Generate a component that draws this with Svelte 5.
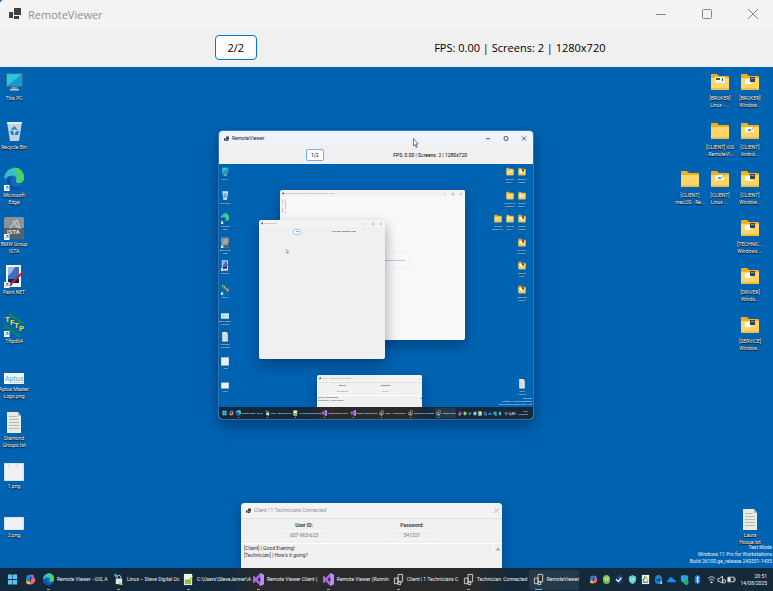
<script>
  const shortcuts = [
    { icon: 'pc', label: 'This PC' },
    { icon: 'bin', label: 'Recycle Bin' },
    { icon: 'edge', label: 'Microsoft\nEdge', link: true },
    { icon: 'ista', label: 'BMW Group\nISTA', link: true },
    { icon: 'paint', label: 'Paint.NET', link: true },
    { icon: 'tftp', label: 'Tftpd64', link: true },
    { icon: 'aptus', label: 'Aptus Master\nLogo.png' },
    { icon: 'text', label: 'Diamond\nGroups.txt' },
    { icon: 'image', label: '1.png' },
    { icon: 'imageWide', label: '2.png' },
  ];

  // null leaves the grid cell empty
  const folders = [
    null, { icon: 'folder', mark: 'key', label: '[BROKER]\nLinux - ...' }, { icon: 'folder', mark: 'dark', label: '[BROKER]\nWindow...' },
    null, { icon: 'folder', label: '[CLIENT] iOS\n- RemoteVi...' }, { icon: 'folder', mark: 'pen', label: '[CLIENT]\nAndroi...' },
    { icon: 'folder', label: '[CLIENT]\nmacOS - Re...' }, { icon: 'folder', mark: 'pen', label: '[CLIENT]\nLinux -...' }, { icon: 'folder', mark: 'dark', label: '[CLIENT]\nWindow...' },
    null, null, { icon: 'folder', mark: 'dark', label: '[TECHNIC...\nWindows ...' },
    null, null, { icon: 'folder', mark: 'dark', label: '[DRIVER]\nWindo...' },
    null, null, { icon: 'folder', mark: 'dark', label: '[SERVICE]\nWindow...' },
    null, null, null,
    null, null, null,
    null, null, null,
    null, null, { icon: 'text', label: 'Laura\nHosue.txt' },
  ];

  const tasks = [
    { icon: 'edge', label: 'Remote Viewer - iOS, A' },
    { icon: 'putty', label: 'Linux – Steve Digital Oc' },
    { icon: 'notepad', label: 'C:\\Users\\SteveJenner\\A' },
    { icon: 'vs', label: 'Remote Viewer Client (' },
    { icon: 'vs', label: 'Remote Viewer (Runnin' },
    { icon: 'app', label: 'Client | 1 Technicians C' },
    { icon: 'app', label: 'Technician: Connected' },
    { icon: 'app', label: 'RemoteViewer', active: true },
  ];

  const tray = ['copilot', 'torrent', 'steam', 'shield', 'drive', 'teams', 'cloud', 'defender', 'bluetooth'];
</script>

{#snippet logo()}
  <svg class="logo" viewBox="0 0 12 12" aria-hidden="true">
    <path d="M0 4h4v6H0zM5 0h7v7H5zM5 8h5v3H5z" fill="#404040" />
  </svg>
{/snippet}

{#snippet controls()}
  <div class="controls">
    <button aria-label="Minimize"><svg viewBox="0 0 10 10"><path d="M0 5.5h10" /></svg></button>
    <button aria-label="Maximize"><svg viewBox="0 0 10 10"><rect x=".5" y=".5" width="9" height="9" rx="1" /></svg></button>
    <button aria-label="Close"><svg viewBox="0 0 10 10"><path d="M0 0l10 10M10 0L0 10" /></svg></button>
  </div>
{/snippet}

{#snippet art(name, mark)}
  {#if name === 'pc'}
    <path d="M8 16h5l1 4H7z" fill="#7f93a0" />
    <path d="M6 19h9v1.500H6z" fill="#b9c5cc" />
    <rect x="2" y="3" width="17" height="14" rx="1" fill="#31708f" />
    <path d="M3 4h15v12H3z" fill="#2cc3dc" />
    <path d="M18 4v12H3z" fill="#159bd0" />
  {:else if name === 'bin'}
    <path d="M3 3h15l-3 19H6z" fill="#c3d3df" />
    <path d="M3 3h15l-.5 2h-14z" fill="#e6edf2" />
    <path d="M10.500 7l3 4h-2l-1-1.500-1.500 2-2-1zM6 12h3l1 4H7.500zM15 12l-1 4h-3v-2l2-2z" fill="#1480d6" />
  {:else if name === 'edge'}
    <ellipse cx="10" cy="12" rx="10" ry="11.500" fill="#1267b8" />
    <path d="M0 12C1-2 20-3 20 11c0 6-8 6-8 3 2-4-3-9-12-2z" fill="#35c1c9" />
    <path d="M9 .5c8 0 11 5 11 10.500 0 6-8 6-8 3C16 8 12 4 9 .5z" fill="#4bd35b" />
    <path d="M6 14c0 6 6 8 12 5-6 8-15 3-15-4 0-3 2-5 5-5-1 1-2 2-2 4z" fill="#0b4f9c" />
  {:else if name === 'ista'}
    <rect y="1" width="20" height="22" rx="2" fill="#8b9195" />
    <path d="M0 12h20v9l-2 2H2l-2-2z" fill="#596065" />
    <path d="M6 12L13 4l3 9M9 5l5 7" stroke="#b9bec1" stroke-width="1.500" fill="none" />
    <text x="3" y="18" font-size="6" font-weight="700" fill="#dce0e2">ISTA</text>
  {:else if name === 'paint'}
    <path d="M2 1h15v22H2z" fill="#f2f5f8" />
    <path d="M4 3h11v13H4z" fill="#416cc0" />
    <path d="M4 3h7l-3 5-4 4z" fill="#98b8ea" />
    <path d="M4 15h11v4H4z" fill="#17254e" />
    <path d="M19 8L8 19l-2 3" stroke="#b02832" stroke-width="2" fill="none" />
  {:else if name === 'tftp'}
    <path d="M5 1l15 10M0 12l16 12" stroke="#118c36" stroke-width="2" />
    <g font-size="8" font-weight="700" fill="#ffd21e">
      <text x="1" y="9">T</text>
      <text x="6" y="12">F</text>
      <text x="10" y="15">T</text>
      <text x="15" y="18">P</text>
    </g>
  {:else if name === 'aptus'}
    <path d="M0 12h20v11H0z" fill="#f3f8fb" />
    <text x="1" y="20" font-size="7" fill="#35afe0">Aptus</text>
    <path d="M8 21.500h11" stroke="#c8d4da" />
  {:else if name === 'text'}
    <path d="M3 2h11l3 4v17H3z" fill="#e9e9e6" />
    <path d="M14 2l3 4h-3z" fill="#adb2b5" />
    <path d="M5 6.500h8M5 9.500h10M5 12.500h10M5 15.500h10M5 18.500h10" stroke="#b7b9ba" />
  {:else if name === 'image'}
    <path d="M.5 5.500h19v17H.5z" fill="#f0f0f0" stroke="#d3e4f4" />
    <path d="M4 7.500h2M12 7.500h2" stroke="#ccc" />
  {:else if name === 'imageWide'}
    <path d="M.5 10.500h19v12H.5z" fill="#f0f0f0" stroke="#d3e4f4" />
  {:else if name === 'folder'}
    <path d="M1 5q0-1 1-1h5l2 2h9q1 0 1 1v5H1z" fill="#f3ae1e" />
    <path d="M1 8h18v11q0 1-1 1H2q-1 0-1-1z" fill="#ffd667" />
    <path d="M1 18h18v1q0 1-1 1H2q-1 0-1-1z" fill="#f5bd42" />
    {#if mark === 'dark'}
      <path d="M5 9h6v5H5z" fill="#fff" />
      <path d="M10 7h5v5h-5z" fill="#3d434a" />
      <path d="M11 8.500h3" stroke="#8f979e" />
    {:else if mark === 'key'}
      <path d="M5 7h10v6H5z" fill="#eef3ed" />
      <path d="M6 8h4v2H6zM12 8h1v3h-1z" fill="#345b45" />
    {:else if mark === 'pen'}
      <path d="M5 8h9v5H8l-3 2z" fill="#f5f8f5" />
      <path d="M15 6l-3 5" stroke="#dd9b32" />
      <path d="M8 10h3v2H8z" fill="#63a2ad" />
    {/if}
  {/if}
{/snippet}

{#snippet shortcut(item)}
  <a class="shortcut" href="#{item.icon}">
    <svg viewBox="0 0 20 24" preserveAspectRatio="none" aria-hidden="true">
      {@render art(item.icon, item.mark)}
      {#if item.link}
        <path d="M0 18h5.500v6H0z" fill="#fff" />
        <path d="M1.500 22.500l2.500-3M2 19.500h2v2.500" stroke="#1377cf" fill="none" stroke-width=".8" />
      {/if}
    </svg>
    <span>{item.label}</span>
  </a>
{/snippet}

{#snippet taskIcon(name)}
  <svg class="task-icon" viewBox="0 0 12 14" preserveAspectRatio="none" aria-hidden="true">
    {#if name === 'start'}
      <path d="M1 1.500h4.700v5H1zM6.300 1.500H11v5H6.300zM1 7.500h4.700v5H1zM6.300 7.500H11v5H6.300z" fill="#55c8f7" />
    {:else if name === 'copilot'}
      <path d="M3 2h4L5 9H1q0-5 2-7z" fill="#2587dc" />
      <path d="M6 2h3l2 5-3 1z" fill="#a95ae0" />
      <path d="M11 6q1 4-3 6H5l2-6z" fill="#ef6b68" />
      <path d="M1 9h4l1 3H3q-2 0-2-3z" fill="#f0c437" />
    {:else if name === 'edge'}
      <g transform="scale(.6 .58)">{@render art('edge')}</g>
    {:else if name === 'putty'}
      <path d="M1 1l4 1-2 3z" fill="#3ad2f0" />
      <path d="M3 6h7v6H3z" fill="#e4e6e7" />
      <path d="M4.500 6V3.500q2-2 4 0V6" stroke="#cdd1d3" fill="none" />
      <path d="M7 9l4 4H7z" fill="#9edb35" />
    {:else if name === 'notepad'}
      <path d="M1 1h9v12H1z" fill="#eef3df" />
      <path d="M2 7h7v5H2z" fill="#84c446" />
      <path d="M11 3L6 9" stroke="#c48c2b" />
    {:else if name === 'vs'}
      <path d="M8 0l4 2v10l-4 2-5-5-2 2-1-1V4l1-1 2 2z" fill="#a66be0" />
      <path d="M8 4v6L5 7z" fill="#29213d" />
      <path d="M8 0l4 2v10l-4 2z" fill="#d3a1ff" opacity=".6" />
    {:else if name === 'app'}
      <path d="M1.500 5.500h4v6h-4zM5.500 1.500h5v8h-5zM5.500 9.500h3v3h-3z" fill="#333" stroke="#d5d5d5" />
    {/if}
  </svg>
{/snippet}

{#snippet trayIcon(name)}
  <svg viewBox="0 0 10 12" preserveAspectRatio="none" aria-hidden="true">
    {#if name === 'copilot'}
      <path d="M2 2h4L4 7H1z" fill="#2587dc" />
      <path d="M6 2h2l1 5H6z" fill="#b465e0" />
      <path d="M9 6q0 4-3 4H3l3-4z" fill="#ec6c5f" />
      <path d="M1 7h3l1 3H3q-2 0-2-3z" fill="#f0c437" />
    {:else if name === 'torrent'}
      <ellipse cx="5" cy="6" rx="4" ry="5" fill="#77bd45" />
      <path d="M3.500 3v3q1.500 3 3 0V3" stroke="#fff" fill="none" />
    {:else if name === 'steam'}
      <ellipse cx="5" cy="6" rx="4" ry="5" fill="#193e70" />
      <path d="M1 6l3 2 3-4" stroke="#fff" stroke-width="1.500" fill="none" />
    {:else if name === 'shield'}
      <path d="M5 1l4 2v4q-1 3-4 4-3-1-4-4V3z" fill="#67d1ce" />
      <path d="M3.500 6l1 1 2-2.500" stroke="#f4fffc" fill="none" />
    {:else if name === 'drive'}
      <path d="M1 1h8v10H1z" fill="#fff" />
      <path d="M5 2L2 8" stroke="#24a35a" stroke-width="1.500" />
      <path d="M5 2l3 6" stroke="#f6bd2b" stroke-width="1.500" />
      <path d="M2 9h6" stroke="#397fea" stroke-width="1.500" />
    {:else if name === 'teams'}
      <ellipse cx="5" cy="6" rx="4" ry="5" fill="#2085cc" />
      <path d="M3 5h4v3H3z" fill="#104b7b" />
      <path d="M7 8h2v3H7z" fill="#9ed8f7" />
    {:else if name === 'cloud'}
      <path d="M0 8q0-2 2-2 1-4 4-2 1 1 1.500 2Q10 6 10 8.500L9 9H1z" fill="#168ee5" />
    {:else if name === 'defender'}
      <path d="M1 2l4-1 4 1v4q-1 3-4 4Q1 9 1 6z" fill="#28a5df" />
      <ellipse cx="7" cy="9" rx="2.500" ry="3" fill="#2eab55" />
    {:else if name === 'bluetooth'}
      <rect x="2" y="1" width="6" height="10" rx="3" fill="#0b78e5" />
      <path d="M3.500 4l3 4L5 9.500v-7L6.500 4l-3 4" stroke="#fff" stroke-width=".8" fill="none" />
    {:else if name === 'wifi'}
      <path d="M1 5q4-4 8 0M2.500 7q2.500-3 5 0" stroke="#ddd" fill="none" />
      <path d="M4 8h2v2H4z" fill="#ddd" />
    {:else if name === 'sound'}
      <path d="M1 5h2l3-3v8L3 8H1z" stroke="#ddd" fill="none" />
      <ellipse cx="8" cy="8" rx="1.500" ry="2" stroke="#ddd" fill="none" />
    {:else if name === 'battery'}
      <path d="M1 3.500h7v5H1z" stroke="#ddd" fill="none" />
      <path d="M1 4h3v4H1zM8.500 5h1v2h-1z" fill="#eee" />
    {/if}
  </svg>
{/snippet}

{#snippet toolbar(screen, status)}
  <div class="toolbar">
    <button class="screen">{screen}</button>
    <span>{status}</span>
  </div>
{/snippet}

{#snippet client()}
  <section class="window client">
    <header class="titlebar">
      {@render logo()}
      <span>Client | 1 Technicians Connected</span>
      <button class="close" aria-label="Close"><svg viewBox="0 0 10 10"><path d="M0 0l10 10M10 0L0 10" /></svg></button>
    </header>
    <div class="session">
      <label>User ID:<input value="607-965-623" readonly /></label>
      <label>Password:<input value="541321" readonly /></label>
    </div>
    <div class="chat">
      <ul>
        <li>[Client] | Good Evening!</li>
        <li>[Technician] | How's it going?</li>
      </ul>
      <button aria-label="Scroll up"><svg viewBox="0 0 6 6"><path d="M0 5l3-4 3 4z" /></svg></button>
    </div>
  </section>
{/snippet}

{#snippet desktop(content)}
  <div class="desktop">
    <nav class="grid left" aria-label="Shortcuts">
      {#each shortcuts as item}{@render shortcut(item)}{/each}
    </nav>
    <nav class="grid right" aria-label="Folders">
      {#each folders as item}
        {#if item}{@render shortcut(item)}{:else}<i></i>{/if}
      {/each}
    </nav>
    <p class="watermark">Test Mode<br />Windows 11 Pro for Workstations<br />Build 26100.ge_release.240331-1435</p>
    {@render client()}
    {@render content()}
  </div>
  <footer class="taskbar">
    <button class="pin" aria-label="Start">{@render taskIcon('start')}</button>
    <button class="pin" aria-label="Copilot">{@render taskIcon('copilot')}</button>
    <div class="tasks">
      {#each tasks as task}
        <button class="task" class:active={task.active}>
          {@render taskIcon(task.icon)}
          <span>{task.label}</span>
        </button>
      {/each}
    </div>
    <div class="tray">
      {#each tray as name}{@render trayIcon(name)}{/each}
    </div>
    <div class="tray status">
      {@render trayIcon('wifi')}
      {@render trayIcon('sound')}
      {@render trayIcon('battery')}
    </div>
    <time>20:51<br />14/08/2025</time>
  </footer>
{/snippet}

{#snippet pointer()}
  <svg class="pointer" viewBox="0 0 6 10" aria-hidden="true">
    <path d="M.5.5v7.500l1.500-1.500L3.200 9.500l1-.5L3.200 6h2z" fill="#fff" stroke="#222" stroke-width=".6" />
  </svg>
{/snippet}

{#snippet innerContent()}
  <section class="window sharing">
    <header class="titlebar">
      {@render logo()}
      <span>Technician: Connected To Windows Device (RTB1-UB10)</span>
      {@render controls()}
    </header>
    <p class="side">[Registry] Viewer<br />OS | Connection</p>
    <button class="start">Start Streaming Screen</button>
  </section>
  <section class="window blank">
    <header class="titlebar">
      {@render logo()}
      <span>RemoteViewer</span>
      {@render controls()}
    </header>
    {@render toolbar('0/0', 'FPS: 0.00 | Screens: 0 | 0x0')}
    {@render pointer()}
  </section>
{/snippet}

{#snippet outerContent()}
  <section class="window viewer small">
    <header class="titlebar">
      {@render logo()}
      <span>RemoteViewer</span>
      {@render controls()}
    </header>
    {@render toolbar('1/2', 'FPS: 0.00 | Screens: 2 | 1280x720')}
    {@render desktop(innerContent)}
    {@render pointer()}
  </section>
{/snippet}

<main class="app">
  <header class="titlebar">
    {@render logo()}
    <span>RemoteViewer</span>
    {@render controls()}
  </header>
  {@render toolbar('2/2', 'FPS: 0.00 | Screens: 2 | 1280x720')}
  {@render desktop(outerContent)}
</main>

<style>
  :global(body) {
    margin: 0;
    background: #0063b1;
  }

  .app {
    --text: 5px;
    --line: 7px;
    --cell: 30px;
    --icon-w: 20px;
    --icon-h: 24px;
    --bar: 23px;
    min-height: 100vh;
    display: flex;
    flex-direction: column;
    font: 11px "Open Sans", "Noto Sans", sans-serif;
    color: #1a1a1a;
  }

  .app * {
    box-sizing: border-box;
  }

  button {
    padding: 0;
    border: 0;
    background: none;
    color: inherit;
    font: inherit;
  }

  svg {
    display: block;
    flex: none;
  }

  .titlebar {
    height: 28px;
    padding-left: 9px;
    display: flex;
    align-items: center;
    gap: 7px;
    flex: none;
    background: #f3f3f3;
    border-top-left-radius: 4px;
    color: #8f8f8f;
    white-space: nowrap;
  }

  .logo {
    width: 12px;
    height: 12px;
  }

  .controls {
    display: flex;
    gap: 6px;
    margin-left: auto;
  }

  .controls button {
    width: 40px;
    height: 26px;
    display: grid;
    place-items: center;
  }

  .controls svg {
    width: 10px;
    height: 10px;
  }

  .controls svg,
  .close svg {
    fill: none;
    stroke: #858585;
    overflow: visible;
  }

  .toolbar {
    height: 39px;
    flex: none;
    display: grid;
    grid-template-columns: minmax(0, 122fr) minmax(0, 25fr) minmax(0, 53fr);
    align-items: center;
    justify-items: center;
    background: #f0f0f0;
    color: #000;
    white-space: nowrap;
  }

  .screen {
    width: 42px;
    height: 25px;
    border: 1px solid #0078d4;
    border-radius: 4px;
    background: #fdfdfd;
  }

  /* Desktop */
  .desktop {
    position: relative;
    flex: 1;
    min-height: 0;
    display: flex;
    justify-content: space-between;
    overflow: hidden;
    background: #0063b1;
    font-family: Roboto, "Open Sans", sans-serif;
    font-size: var(--text);
    line-height: var(--line);
  }

  .grid {
    display: grid;
    grid-template-rows: repeat(10, minmax(0, 1fr));
    padding-bottom: 16px;
  }

  .left {
    grid-template-columns: 28px;
  }

  .right {
    grid-template-columns: repeat(3, var(--cell));
    padding-right: 8px;
  }

  .shortcut {
    min-width: 0;
    padding-top: 3px;
    display: flex;
    flex-direction: column;
    align-items: center;
    gap: 1px;
    color: #fff;
    text-align: center;
    text-decoration: none;
    text-shadow: 0 1px 1px #000, 0 0 1px #000;
    white-space: pre;
  }

  .shortcut svg {
    width: var(--icon-w);
    height: var(--icon-h);
    text-shadow: none;
  }

  .watermark {
    position: absolute;
    right: 1px;
    bottom: 3px;
    margin: 0;
    color: #e8f1fa;
    text-align: right;
  }

  .window {
    position: absolute;
    display: flex;
    flex-direction: column;
    border-radius: 4px;
    overflow: hidden;
    background: #f0f0f0;
    box-shadow: 0 6px 14px rgba(0, 20, 60, 0.4);
  }

  .window .titlebar {
    height: 15px;
    padding-left: 5px;
    gap: 3px;
  }

  .window .logo {
    width: 5px;
    height: 6px;
  }

  /* Client window */
  .client {
    left: 241px;
    bottom: 0;
    width: 261px;
    height: 65px;
    border-radius: 4px 4px 0 0;
    color: #333;
  }

  .close {
    width: 12px;
    height: 12px;
    margin-left: auto;
    display: grid;
    place-items: center;
  }

  .close svg {
    width: 5px;
    height: 5px;
  }

  .session {
    height: 25px;
    padding: 3px 36px 0;
    display: flex;
    gap: 54px;
    border-top: 1px solid #e2e2e2;
  }

  .session label {
    display: flex;
    flex-direction: column;
    align-items: center;
    gap: 1px;
    font-weight: 600;
  }

  .session input {
    width: 54px;
    height: 10px;
    padding: 0;
    border: 1px solid #f7f7f7;
    background: #f0f0f0;
    color: #777;
    font: inherit;
    font-weight: 400;
    text-align: center;
  }

  .chat {
    flex: 1;
    display: flex;
    border-top: 1px solid #fff;
    color: #3a2a45;
  }

  .chat ul {
    flex: 1;
    margin: 0;
    padding: 1px 3px;
    list-style: none;
  }

  .chat button {
    width: 9px;
    height: 9px;
    display: grid;
    place-items: center;
    border-left: 1px solid #fff;
  }

  .chat button svg {
    width: 4px;
    height: 4px;
    fill: #8a8a8a;
  }

  /* Taskbar */
  .taskbar {
    height: var(--bar);
    padding: 0 6px 0 3px;
    flex: none;
    display: flex;
    align-items: center;
    background: linear-gradient(90deg, #13293b 0 30%, #2a2a2c 33% 62%, #14293a 66%);
    color: #f2f2f2;
    font-family: Roboto, "Open Sans", sans-serif;
    font-size: var(--text);
    line-height: var(--line);
    white-space: nowrap;
  }

  .pin {
    width: 18px;
    display: grid;
    place-items: center;
  }

  .task-icon {
    width: 11px;
    height: 13px;
  }

  .tasks {
    flex: 1;
    display: grid;
    grid-template-columns: repeat(7, minmax(0, 71fr)) minmax(0, 51fr);
  }

  .task {
    position: relative;
    min-width: 0;
    height: 20px;
    padding-left: 4px;
    display: flex;
    align-items: center;
    gap: 3px;
    border-radius: 2px;
    text-align: left;
  }

  .task::after {
    content: "";
    position: absolute;
    left: 8px;
    bottom: 0;
    width: 3px;
    height: 1px;
    background: #a6a6a6;
  }

  .task.active {
    background: #24394a;
  }

  .task.active::after {
    left: 6px;
    width: 7px;
    background: #4cc2ff;
  }

  .tray {
    margin-left: 10px;
    display: flex;
    gap: 4px;
  }

  .tray svg {
    width: 9px;
    height: 11px;
  }

  .status {
    margin-left: 5px;
    gap: 1px;
  }

  time {
    width: 31px;
    text-align: right;
  }

  .pointer {
    position: absolute;
    left: 194px;
    top: 7px;
    width: 6px;
    height: 10px;
  }

  /* Nested remote screen */
  .viewer {
    left: 219px;
    top: 64px;
    width: 314px;
    height: 288px;
    box-shadow: 0 0 0 1px rgba(120, 170, 215, 0.4), 0 6px 16px rgba(0, 20, 60, 0.5);
  }

  .small {
    --text: 2px;
    --line: 3px;
    --cell: 12px;
    --icon-w: 8px;
    --icon-h: 11px;
    --bar: 12px;
  }

  .small > .titlebar {
    background: #eef3fb;
    color: #222;
  }

  .small > .titlebar .controls button {
    width: 18px;
    height: 14px;
  }

  .small > .titlebar .controls svg {
    width: 4px;
    height: 5px;
    stroke: #333;
    stroke-width: 2;
  }

  .small > .toolbar {
    height: 18px;
  }

  .small > .toolbar .screen {
    width: 18px;
    height: 12px;
    border-color: #6db3e8;
    border-radius: 2px;
  }

  .small .left {
    grid-template-columns: 12px;
  }

  .small .right {
    padding-right: 5px;
  }

  .small .grid {
    padding-bottom: 7px;
  }

  .small .shortcut {
    padding-top: 2px;
    text-shadow: 0 0 1px #000;
  }

  .small .watermark {
    bottom: 1px;
  }

  .small .taskbar {
    padding: 0 5px 0 2px;
  }

  .small .pin {
    width: 7px;
  }

  .small .task-icon {
    width: 5px;
    height: 6px;
  }

  .small .task {
    height: 10px;
    padding-left: 1px;
    gap: 1px;
  }

  .small .task::after {
    left: 3px;
    width: 1px;
  }

  .small .tray {
    margin-left: 2px;
    gap: 1px;
  }

  .small .tray svg {
    width: 4px;
    height: 5px;
  }

  .small .tray.status {
    gap: 0;
  }

  .small time {
    width: 12px;
  }

  .small .client {
    left: 98px;
    width: 105px;
    height: 32px;
    border-radius: 2px 2px 0 0;
  }

  .small .window .titlebar {
    height: 7px;
    padding-left: 2px;
    gap: 1px;
  }

  .small .window .logo {
    width: 2px;
    height: 3px;
  }

  .small .close {
    width: 5px;
    height: 5px;
  }

  .small .close svg {
    width: 2px;
    height: 2px;
  }

  .small .session {
    height: 13px;
    padding: 1px 14px 0;
    gap: 20px;
  }

  .small .session input {
    width: 23px;
    height: 5px;
  }

  .small .chat ul {
    padding: 0 1px;
  }

  .small .chat button {
    width: 4px;
    height: 4px;
  }

  .small .chat button svg {
    width: 2px;
    height: 2px;
  }

  .small .controls {
    gap: 0;
  }

  .small .window .controls button {
    width: 8px;
    height: 7px;
  }

  .small .window .controls svg {
    width: 2px;
    height: 2px;
    stroke-width: 2;
  }

  .sharing {
    left: 61px;
    top: 26px;
    width: 185px;
    height: 150px;
    border-radius: 2px;
    background: #f9f9f9;
  }

  .side {
    margin: 2px 0 0 1px;
    writing-mode: vertical-rl;
    transform: rotate(180deg);
    align-self: flex-start;
    color: #555;
  }

  .start {
    position: absolute;
    right: 55px;
    top: 62px;
    width: 50px;
    height: 17px;
    padding-right: 4px;
    border: 1px solid #f1f1f1;
    color: #777;
    text-align: right;
  }

  .blank {
    left: 40px;
    top: 56px;
    width: 126px;
    height: 139px;
    border-radius: 2px;
  }

  .blank .toolbar {
    height: 9px;
  }

  .blank .screen {
    width: 8px;
    height: 6px;
    border-color: #9fcdf0;
    border-radius: 2px;
  }

  .blank .pointer {
    left: 27px;
    top: 29px;
    width: 3px;
    height: 5px;
  }

  .small > .titlebar,
  .small > .toolbar {
    font-size: 5px;
    line-height: 7px;
  }
</style>
